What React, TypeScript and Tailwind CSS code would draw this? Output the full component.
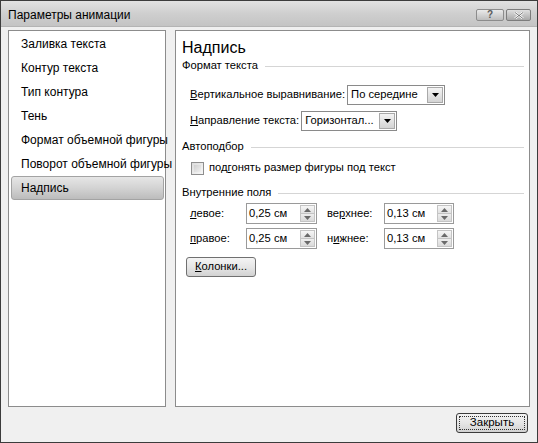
import React from "react";

const font = { fontFamily: '"Liberation Sans", Arial, sans-serif' };

function Combo({ value, width }: { value: string; width: string }) {
  return (
    <div className={`flex h-[20px] ${width} items-stretch border border-[#8a8a8a] bg-white`}>
      <div className="flex flex-1 items-center pl-[3px] text-[11.2px] leading-none text-black whitespace-nowrap overflow-hidden">
        {value}
      </div>
      <div className="m-[1px] flex w-[16px] items-center justify-center border border-[#a9a9a9] bg-gradient-to-b from-[#f4f4f4] to-[#d4d4d4]">
        <svg width="7" height="4" viewBox="0 0 7 4">
          <path d="M0 0 H7 L3.5 4 Z" fill="#000" />
        </svg>
      </div>
    </div>
  );
}

function Spin({ value, width }: { value: string; width: string }) {
  return (
    <div className={`flex h-[21px] ${width} items-stretch border border-[#9a9a9a] bg-white`}>
      <div className="flex flex-1 items-center pl-[2px] text-[11.2px] leading-none text-black whitespace-nowrap">
        {value}
      </div>
      <div className="my-[1px] mr-[1px] flex w-[15px] flex-col">
        <div className="flex flex-1 items-center justify-center border border-[#c4c4c4] bg-gradient-to-b from-[#f6f6f6] to-[#e2e2e2]">
          <svg width="7" height="4" viewBox="0 0 7 4">
            <path d="M0 4 H7 L3.5 0 Z" fill="#6a6a6a" />
          </svg>
        </div>
        <div className="flex flex-1 items-center justify-center border border-t-0 border-[#c4c4c4] bg-gradient-to-b from-[#eeeeee] to-[#dadada]">
          <svg width="7" height="4" viewBox="0 0 7 4">
            <path d="M0 0 H7 L3.5 4 Z" fill="#6a6a6a" />
          </svg>
        </div>
      </div>
    </div>
  );
}

function Section({ title, className }: { title: string; className: string }) {
  return (
    <div className={`flex h-[14px] items-center ${className}`}>
      <span className="text-[11.2px] leading-none text-black whitespace-nowrap">{title}</span>
      <div className="ml-[7px] h-px flex-1 bg-[#d5d5d5]" />
    </div>
  );
}

const items = [
  "Заливка текста",
  "Контур текста",
  "Тип контура",
  "Тень",
  "Формат объемной фигуры",
  "Поворот объемной фигуры",
  "Надпись",
];

export default function App() {
  return (
    <div
      className="flex h-[443px] w-[538px] flex-col border border-[#3c3c3c] bg-[#f0f0f0] text-black"
      style={font}
    >
      {/* Title bar */}
      <div className="flex h-[26px] items-start bg-gradient-to-b from-[#e2e2e2] via-[#cfcfcf] to-[#c4c4c4] border-b border-[#b4b4b4]">
        <div className="mt-[6px] ml-[7px] flex-1 text-[12px] leading-[16px] text-black whitespace-nowrap">
          Параметры анимации
        </div>
        <div className="mt-[8px] mr-[6px] flex gap-[2px]">
          <div className="flex h-[12px] w-[28px] items-center justify-center rounded-[2px] border border-[#8c8c8c] bg-gradient-to-b from-[#eaeaea] to-[#bdbdbd] text-[10px] font-bold leading-none text-[#5a5a5a]">
            ?
          </div>
          <div className="flex h-[12px] w-[25px] items-center justify-center rounded-[2px] border border-[#7c7c7c] bg-gradient-to-b from-[#e0e0e0] to-[#a8a8a8]">
            <svg width="10" height="7" viewBox="0 0 10 7">
              <path d="M1 0.5 L9 6.5 M9 0.5 L1 6.5" stroke="#ffffff" strokeWidth="2.2" />
              <path d="M1 0.5 L9 6.5 M9 0.5 L1 6.5" stroke="#555" strokeWidth="0.8" />
            </svg>
          </div>
        </div>
      </div>

      {/* Body */}
      <div className="flex flex-1 flex-col px-[7px] pt-[3px]">
        <div className="flex h-[377px] gap-[9px]">
          {/* Left list */}
          <div className="flex w-[158px] flex-col border border-[#8c8c8c] bg-white pt-[1px] pl-[2px] pr-[1px]">
            {items.map((t, i) =>
              i === 6 ? (
                <div
                  key={t}
                  className="flex h-[24px] items-center rounded-[3px] border border-[#a3a3a3] bg-gradient-to-b from-[#e6e6e6] via-[#d3d3d3] to-[#bcbcbc] pl-[9px] text-[12px] leading-none whitespace-nowrap"
                >
                  {t}
                </div>
              ) : (
                <div key={t} className="flex h-[24px] items-center pl-[10px] text-[12px] leading-none whitespace-nowrap">
                  {t}
                </div>
              )
            )}
          </div>

          {/* Right panel */}
          <div className="flex flex-1 flex-col border border-[#8c8c8c] bg-white pl-[6px] pr-[5px]">
            <div className="mt-[5px] flex h-[23px] items-center text-[16px] leading-none">Надпись</div>
            <Section title="Формат текста" className="" />

            <div className="mt-[12px] ml-[8px] flex h-[20px] items-center">
              <span className="text-[11.2px] leading-none whitespace-nowrap">
                <span className="underline">В</span>ертикальное выравнивание:
              </span>
              <div className="ml-[2px]">
                <Combo value="По середине" width="w-[98px]" />
              </div>
            </div>

            <div className="mt-[6px] ml-[8px] flex h-[20px] items-center">
              <span className="text-[11.2px] leading-none whitespace-nowrap">
                <span className="underline">Н</span>аправление текста:
              </span>
              <div className="ml-[2px]">
                <Combo value="Горизонтал..." width="w-[96px]" />
              </div>
            </div>

            <Section title="Автоподбор" className="mt-[9px]" />

            <div className="mt-[7px] ml-[9px] flex h-[14px] items-center">
              <div className="h-[13px] w-[13px] border border-[#8e8e8e] bg-gradient-to-br from-[#dcdcdc] to-[#f8f8f8] p-[2px]">
                <div className="h-full w-full bg-gradient-to-br from-[#cfcfcf] to-[#f0f0f0]" />
              </div>
              <span className="ml-[5px] text-[11.2px] leading-none whitespace-nowrap">
                под<span className="underline">г</span>онять размер фигуры под текст
              </span>
            </div>

            <Section title="Внутренние поля" className="mt-[11px]" />

            <div className="mt-[3px] ml-[8px] flex h-[21px] items-center">
              <span className="w-[56px] text-[11.2px] leading-none">
                <span className="underline">л</span>евое:
              </span>
              <Spin value="0,25 см" width="w-[71px]" />
              <span className="ml-[10px] w-[57px] text-[11.2px] leading-none">
                ве<span className="underline">р</span>хнее:
              </span>
              <Spin value="0,13 см" width="w-[70px]" />
            </div>

            <div className="mt-[4px] ml-[8px] flex h-[21px] items-center">
              <span className="w-[56px] text-[11.2px] leading-none">
                <span className="underline">п</span>равое:
              </span>
              <Spin value="0,25 см" width="w-[71px]" />
              <span className="ml-[10px] w-[57px] text-[11.2px] leading-none">
                н<span className="underline">и</span>жнее:
              </span>
              <Spin value="0,13 см" width="w-[70px]" />
            </div>

            <div className="mt-[8px] ml-[4px] flex">
              <div className="flex h-[20px] w-[70px] items-center justify-center rounded-[3px] border border-[#707070] bg-gradient-to-b from-[#f4f4f4] via-[#e6e6e6] to-[#d2d2d2] text-[11.2px] leading-none">
                <span className="underline">К</span>олонки...
              </div>
            </div>
          </div>
        </div>

        {/* Bottom */}
        <div className="mt-[6px] flex justify-end pr-[2px]">
          <div className="flex h-[20px] w-[72px] items-center justify-center rounded-[3px] border border-[#3c3c3c] bg-gradient-to-b from-[#f4f4f4] via-[#e6e6e6] to-[#d2d2d2] p-[2px]">
            <div className="flex h-full w-full items-center justify-center border border-dotted border-[#333] text-[11.5px] leading-none">
              Закрыть
            </div>
          </div>
        </div>
      </div>
    </div>
  );
}
